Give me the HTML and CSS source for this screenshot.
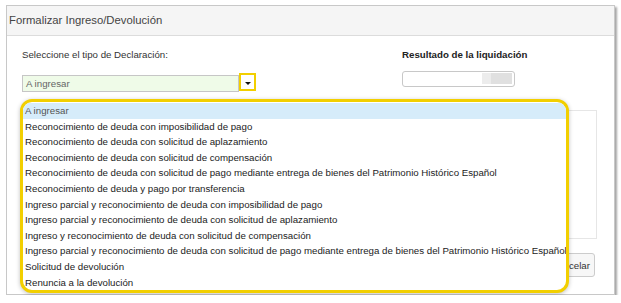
FILE: index.html
```html
<!DOCTYPE html>
<html lang="es">
<head>
    <meta charset="UTF-8">
    <title>Formalizar Ingreso/Devolución</title>
    <link rel="stylesheet" href="styles.css">
</head>
<body>
  <div class="panel">
    <div class="panel-head">Formalizar Ingreso/Devolución</div>
    <div class="panel-body">
      <div class="row">
        <div class="col-left">
          <div class="lbl">Seleccione el tipo de Declaración:</div>
          <div class="combo">
            <div class="combo-field">A ingresar</div>
            <div class="combo-btn"><span class="arrow"></span></div>
            <!-- lista desplegada -->
            <ul class="combo-list">
              <li class="sel">A ingresar</li>
              <li>Reconocimiento de deuda con imposibilidad de pago</li>
              <li>Reconocimiento de deuda con solicitud de aplazamiento</li>
              <li>Reconocimiento de deuda con solicitud de compensación</li>
              <li>Reconocimiento de deuda con solicitud de pago mediante entrega de bienes del Patrimonio Histórico Español</li>
              <li>Reconocimiento de deuda y pago por transferencia</li>
              <li>Ingreso parcial y reconocimiento de deuda con imposibilidad de pago</li>
              <li>Ingreso parcial y reconocimiento de deuda con solicitud de aplazamiento</li>
              <li>Ingreso y reconocimiento de deuda con solicitud de compensación</li>
              <li>Ingreso parcial y reconocimiento de deuda con solicitud de pago mediante entrega de bienes del Patrimonio Histórico Español</li>
              <li>Solicitud de devolución</li>
              <li>Renuncia a la devolución</li>
            </ul>
          </div>
        </div>
        <div class="col-right">
          <div class="lbl bold">Resultado de la liquidación</div>
          <div class="result"><span class="result-fill"></span></div>
        </div>
      </div>
      <div class="box"></div>
      <div class="actions">
        <button class="btn">Cancelar</button>
      </div>
    </div>
  </div>
</body>
</html>
```

FILE: styles.css
```css
body {
    margin: 0;
    background: #fff;
    font-family: "Liberation Sans", Arial, sans-serif;
    color: #333;
}

.panel {
    margin: 5px 7px 0 6px;
    width: 607px;
    border: 1px solid #c8c8c8;
    box-shadow: 2px 2px 2px rgba(0, 0, 0, 0.35);
    background: #fff;
}

.panel-head {
    height: 29px;
    line-height: 29px;
    padding-left: 2px;
    background: #f5f5f5;
    border-bottom: 1px solid #dcdcdc;
    font-size: 11.3px;
    color: #444;
}

.panel-body {
    padding: 12px 17px 17px 15px;
}

.row {
    display: flex;
}

.col-left {
    width: 380px;
}

.lbl {
    font-size: 9.7px;
    line-height: 14px;
    height: 14px;
}

.bold {
    font-weight: bold;
    color: #222;
}

.combo {
    position: relative;
    display: flex;
    margin-top: 13px;
}

.combo-field {
    width: 212px;
    height: 15px;
    line-height: 15px;
    padding-left: 3px;
    border: 1px solid #c6c6c6;
    background: #effbe8;
    font-size: 9.7px;
    color: #666;
}

.combo-btn {
    width: 13px;
    height: 14px;
    margin-top: -2px;
    border: 2px solid #f2cf00;
    background: #fff;
    display: flex;
    align-items: center;
    justify-content: center;
}

.arrow {
    width: 0;
    height: 0;
    margin-top: 2px;
    border-left: 3px solid transparent;
    border-right: 3px solid transparent;
    border-top: 3px solid #111;
}

.combo-list {
    position: absolute;
    left: -2px;
    top: 24px;
    z-index: 5;
    width: 543px;
    margin: 0;
    padding: 1px 0 0;
    list-style: none;
    background: #fff;
    border: 3px solid #f2cf00;
    border-radius: 12px;
    box-shadow: 0 1px 4px rgba(0, 0, 0, 0.25);
    overflow: hidden;
}

.combo-list li {
    height: 15.6px;
    line-height: 15.6px;
    padding-left: 2px;
    font-size: 9.7px;
    color: #222;
    white-space: nowrap;
}

.combo-list li.sel {
    background: #d6ecfa;
    color: #555;
}

.result {
    margin-top: 9px;
    width: 108px;
    height: 12px;
    padding: 1px 2px 1px 1px;
    border: 1px solid #c8c8c8;
    border-radius: 3px;
    display: flex;
    justify-content: flex-end;
}

.result-fill {
    width: 30px;
    height: 11px;
    background: linear-gradient(to right, #ececec 0, #ececec 30%, #e0e0e0 30%);
}

.box {
    margin-top: 18px;
    height: 127px;
    border: 1px solid #e6e6e6;
    border-left: 0;
}

.actions {
    display: flex;
    justify-content: flex-end;
    margin-top: 14px;
    padding-right: 2px;
}

.btn {
    height: 24px;
    padding: 0 4px 0 8px;
    font-family: "Liberation Sans", Arial, sans-serif;
    font-size: 9.7px;
    color: #333;
    background: #f7f7f7;
    border: 1px solid #ccc;
    border-radius: 3px;
}
```
